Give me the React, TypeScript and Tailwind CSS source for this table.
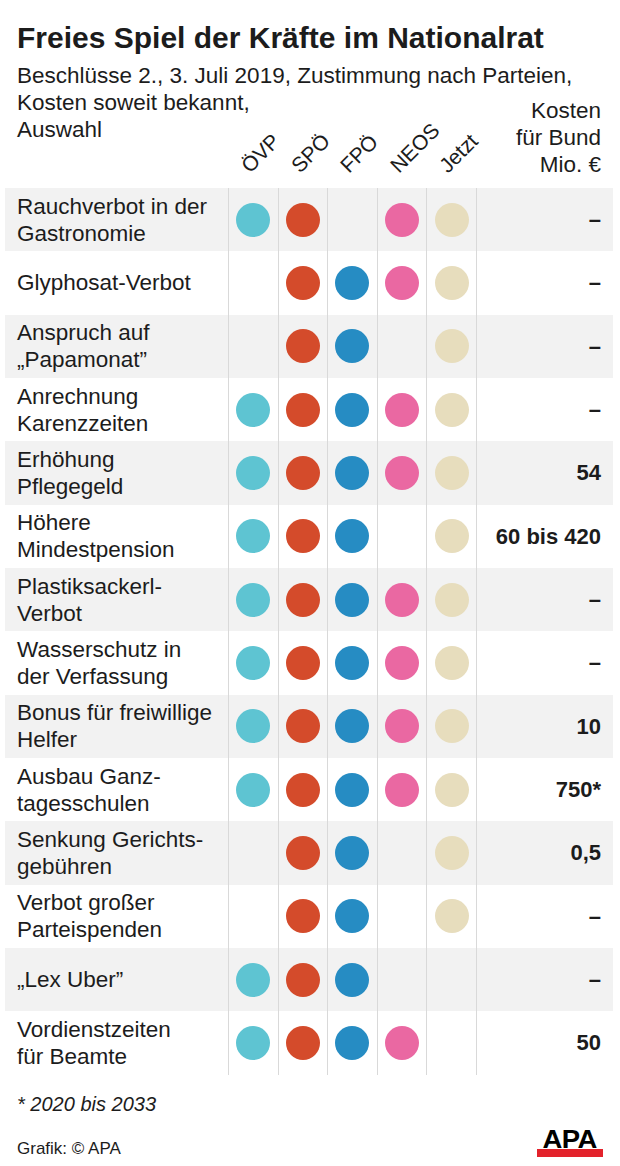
const parties = ['ÖVP', 'SPÖ', 'FPÖ', 'NEOS', 'Jetzt'];

const dotColors = ['bg-[#5ec4d2]', 'bg-[#d44b2b]', 'bg-[#268cc3]', 'bg-[#ea68a2]', 'bg-[#e7ddbd]'];

// Beschlüsse: Zeilen, Zustimmung je Partei (ÖVP, SPÖ, FPÖ, NEOS, Jetzt), Kosten
const rows: { label: string[]; votes: number[]; cost: string }[] = [
  { label: ['Rauchverbot in der', 'Gastronomie'], votes: [1, 1, 0, 1, 1], cost: '–' },
  { label: ['Glyphosat-Verbot'], votes: [0, 1, 1, 1, 1], cost: '–' },
  { label: ['Anspruch auf', '„Papamonat”'], votes: [0, 1, 1, 0, 1], cost: '–' },
  { label: ['Anrechnung', 'Karenzzeiten'], votes: [1, 1, 1, 1, 1], cost: '–' },
  { label: ['Erhöhung', 'Pflegegeld'], votes: [1, 1, 1, 1, 1], cost: '54' },
  { label: ['Höhere', 'Mindestpension'], votes: [1, 1, 1, 0, 1], cost: '60 bis 420' },
  { label: ['Plastiksackerl-', 'Verbot'], votes: [1, 1, 1, 1, 1], cost: '–' },
  { label: ['Wasserschutz in', 'der Verfassung'], votes: [1, 1, 1, 1, 1], cost: '–' },
  { label: ['Bonus für freiwillige', 'Helfer'], votes: [1, 1, 1, 1, 1], cost: '10' },
  { label: ['Ausbau Ganz-', 'tagesschulen'], votes: [1, 1, 1, 1, 1], cost: '750*' },
  { label: ['Senkung Gerichts-', 'gebühren'], votes: [0, 1, 1, 0, 1], cost: '0,5' },
  { label: ['Verbot großer', 'Parteispenden'], votes: [0, 1, 1, 0, 1], cost: '–' },
  { label: ['„Lex Uber”'], votes: [1, 1, 1, 0, 0], cost: '–' },
  { label: ['Vordienstzeiten', 'für Beamte'], votes: [1, 1, 1, 1, 0], cost: '50' },
];

export default function App() {
  return (
    <div className="w-[620px] h-[1166px] overflow-hidden bg-white text-[#1c1c1c] font-['Liberation_Sans',Arial,sans-serif]">
      {/* Titel */}
      <div className="pt-[20px] pl-[17px]">
        <h1 className="text-[30px] leading-[36px] font-bold">Freies Spiel der Kräfte im Nationalrat</h1>
        <p className="mt-[6px] text-[22.5px] leading-[27px] whitespace-nowrap">
          Beschlüsse 2., 3. Juli 2019, Zustimmung nach Parteien,
        </p>
      </div>

      {/* Kopfzeile */}
      <div className="ml-[5px] w-[608px] h-[99px] flex">
        <div className="w-[223px] pl-[12px] text-[22.5px] leading-[27px] whitespace-nowrap">
          Kosten soweit bekannt,
          <br />
          Auswahl
        </div>
        {parties.map((p) => (
          <div key={p} className="w-[49.6px] flex items-end pl-[24px] pb-[12px]">
            <span className="block origin-bottom-left -rotate-45 whitespace-nowrap text-[21px] leading-none">
              {p}
            </span>
          </div>
        ))}
        <div className="flex-1 pt-[8px] pr-[12px] text-right text-[22.5px] leading-[27px]">
          Kosten
          <br />
          für Bund
          <br />
          Mio. €
        </div>
      </div>

      {/* Tabelle */}
      <div className="ml-[5px] w-[608px]">
        {rows.map((row, i) => (
          <div key={i} className={`flex h-[63.33px] ${i % 2 === 0 ? 'bg-[#f2f2f2]' : 'bg-white'}`}>
            <div className="w-[223px] pl-[12px] flex flex-col justify-center text-[22.5px] leading-[27px] whitespace-nowrap">
              {row.label.map((l) => (
                <span key={l}>{l}</span>
              ))}
            </div>
            {row.votes.map((v, j) => (
              <div key={j} className="w-[49.6px] border-l border-[#d9d9d9] flex items-center justify-center">
                {v === 1 && <div className={`w-[34px] h-[34px] rounded-full ${dotColors[j]}`} />}
              </div>
            ))}
            <div className="flex-1 border-l border-[#d9d9d9] flex items-center justify-end pr-[12px] text-[22px] font-bold">
              {row.cost}
            </div>
          </div>
        ))}
      </div>

      {/* Fußzeile */}
      <div className="pl-[17px] pr-[17px]">
        <p className="mt-[17px] text-[20px] leading-[24px] italic">* 2020 bis 2033</p>
        <div className="mt-[14px] flex items-start justify-between">
          <p className="mt-[9px] text-[17px] leading-[20px]">Grafik: © APA</p>
          <div className="flex flex-col items-center">
            <span className="text-[25px] leading-[19px] font-bold tracking-[-0.5px] scale-x-110 text-black">APA</span>
            <div className="w-[66px] h-[8px] bg-[#e3222b]" />
          </div>
        </div>
      </div>
    </div>
  );
}
